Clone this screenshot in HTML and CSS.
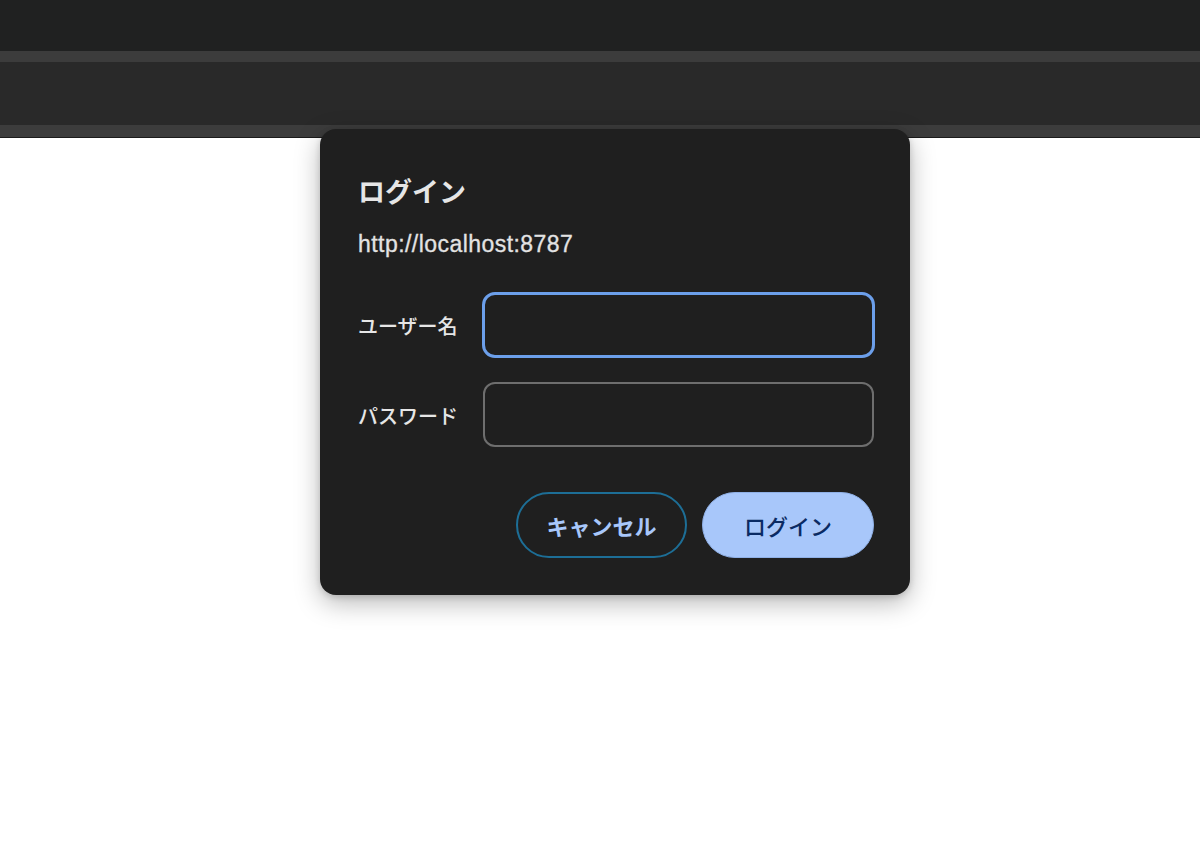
FILE: index.html
```html
<!DOCTYPE html>
<html lang="ja">
<head>
<meta charset="utf-8">
<title>ログイン</title>
<link rel="stylesheet" href="styles.css">
</head>
<body>
<header class="chrome">
  <div class="tabstrip"></div>
  <div class="sep"></div>
  <div class="toolbar"></div>
  <div class="sep sep-bottom"></div>
</header>
<main class="page"></main>
<div class="dialog" role="dialog">
  <h1 class="title">ログイン</h1>
  <p class="origin">http://localhost:8787</p>
  <div class="fields">
    <div class="row">
      <label class="label">ユーザー名</label>
      <div class="input input-focus"></div>
    </div>
    <div class="row">
      <label class="label">パスワード</label>
      <div class="input"></div>
    </div>
  </div>
  <div class="actions">
    <button class="btn btn-cancel">キャンセル</button>
    <button class="btn btn-login">ログイン</button>
  </div>
</div>
</body>
</html>
```
FILE: styles.css
```css
html, body {
  margin: 0;
  padding: 0;
  background: #ffffff;
  height: 100%;
}
body {
  font-family: "Liberation Sans", "Noto Sans CJK JP", sans-serif;
  overflow: hidden;
}
.chrome {
  display: flex;
  flex-direction: column;
}
.tabstrip {
  height: 51px;
  background: #202121;
}
.sep {
  height: 11px;
  background: #3c3c3c;
}
.toolbar {
  height: 63px;
  background: #292929;
}
.sep-bottom {
  height: 12px;
  border-bottom: 1px solid #1b1b1b;
}
.dialog {
  position: absolute;
  left: 320px;
  top: 129px;
  width: 590px;
  box-sizing: border-box;
  padding: 46px 36px 37px 38px;
  background: #1f1f1f;
  border-radius: 16px;
  box-shadow: 0 8px 26px rgba(0, 0, 0, 0.28), 0 2px 6px rgba(0, 0, 0, 0.15);
  color: #e3e3e3;
  display: flex;
  flex-direction: column;
}
.title {
  margin: 0;
  font-family: "Noto Sans CJK JP", sans-serif;
  font-size: 27px;
  line-height: 32px;
  font-weight: 700;
  color: #e6e6e6;
}
.origin {
  margin: 23px 0 0 0;
  font-family: "Liberation Sans", sans-serif;
  font-size: 23px;
  line-height: 28px;
  letter-spacing: 0.45px;
  color: #e3e3e3;
  -webkit-text-stroke: 0.3px #e3e3e3;
}
.fields {
  margin-top: 34px;
  display: flex;
  flex-direction: column;
  gap: 24px;
}
.row {
  display: flex;
  align-items: center;
}
.label {
  width: 125px;
  flex: none;
  font-family: "Noto Sans CJK JP", sans-serif;
  font-size: 20px;
  font-weight: 500;
  line-height: 28px;
  color: #e6e6e6;
  padding-top: 2px;
}
.input {
  flex: 1;
  height: 65px;
  box-sizing: border-box;
  border: 2px solid #6e6e6e;
  border-radius: 12px;
  background: #1f1f1f;
}
.input-focus {
  height: 66px;
  border: 3px solid #6c9fea;
  margin-left: -1px;
  margin-right: -1px;
  border-radius: 13px;
}
.actions {
  margin-top: 45px;
  display: flex;
  justify-content: flex-end;
  gap: 15px;
}
.btn {
  height: 66px;
  width: 171px;
  box-sizing: border-box;
  border-radius: 33px;
  font-family: "Noto Sans CJK JP", sans-serif;
  font-size: 22px;
  font-weight: 700;
  cursor: pointer;
  padding: 0;
}
.btn-cancel {
  background: transparent;
  border: 2px solid #1d6e96;
  color: #a8c7fa;
}
.btn-login {
  width: 172px;
  background: #a8c7fa;
  border: 1px solid #8fb0e6;
  color: #0a2a63;
  font-weight: 500;
}
```
